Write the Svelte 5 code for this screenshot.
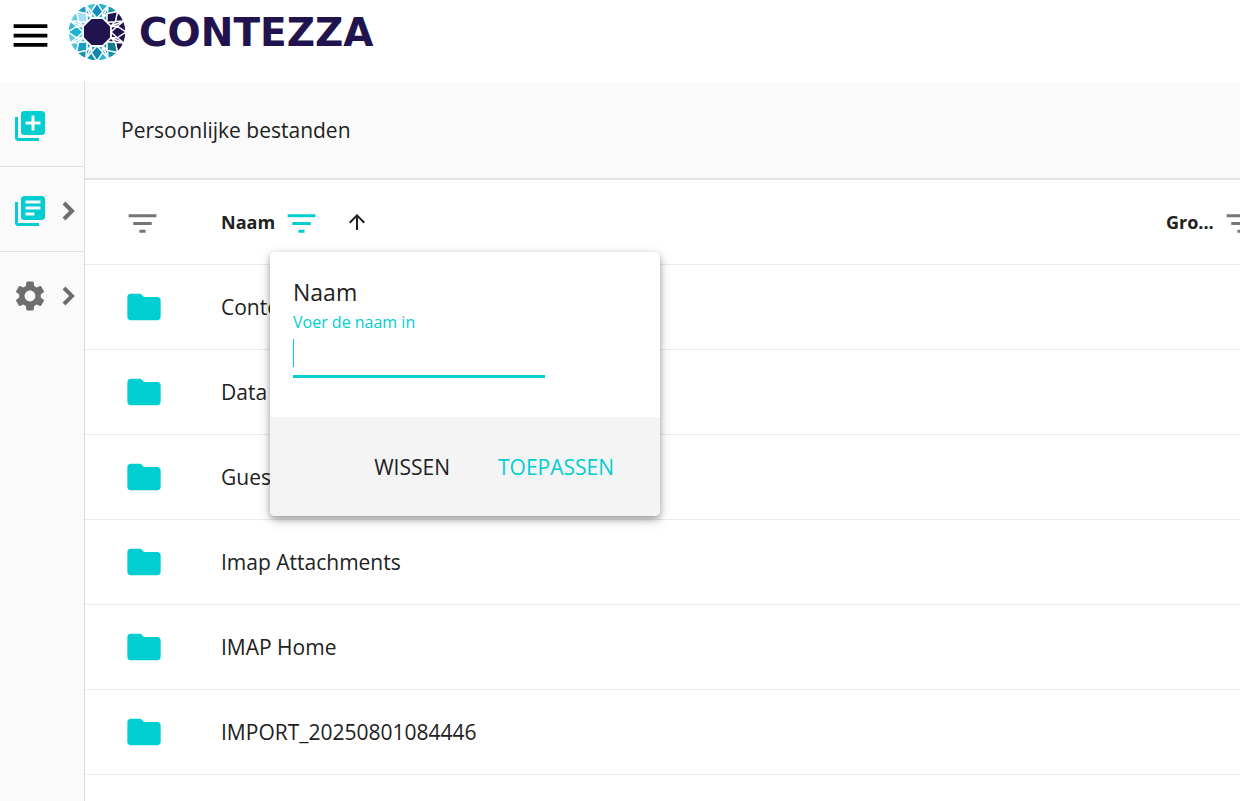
<script>
  import { onMount } from 'svelte';

  let nameFilter = $state('');
  let filterOpen = $state(true);
  let ascending = $state(true);
  let nameInput = $state(null);

  const folders = [
    'Contezza',
    'Data Dictionary',
    'Guest Home',
    'Imap Attachments',
    'IMAP Home',
    'IMPORT_20250801084446'
  ];

  let visibleFolders = $derived(ascending ? folders : [...folders].reverse());

  // Facets of the logo, clockwise from the right
  const facets = [
    { kite: '#21134d', left: '#21134d', right: '#21134d' },
    { kite: '#12808c', left: '#21134d', right: '#0f93b4' },
    { kite: '#0d86ab', left: '#35b9d5', right: '#0f93b4' },
    { kite: '#1a9fc0', left: '#1593b0', right: '#4cc5dc' },
    { kite: '#1bb5d3', left: '#62cde2', right: '#35b7d6' },
    { kite: '#a9dcf5', left: '#5fcfe4', right: '#1a9cc6' },
    { kite: '#128fc2', left: '#47c3da', right: '#27b0cb' },
    { kite: '#21134d', left: '#159aa9', right: '#21134d' }
  ];

  function point(radius, degrees) {
    const rad = (degrees * Math.PI) / 180;
    return `${(29 + radius * Math.cos(rad)).toFixed(2)},${(29 + radius * Math.sin(rad)).toFixed(2)}`;
  }

  function polygon(...points) {
    return points.map(([radius, degrees]) => point(radius, degrees)).join(' ');
  }

  function clearFilter() {
    nameFilter = '';
    nameInput?.focus();
  }

  onMount(() => {
    nameInput?.focus();
  });
</script>

{#snippet filterIcon()}
  <svg class="filter-icon" viewBox="0 0 24 24" aria-hidden="true">
    <path d="M10 18h4v-2h-4v2zM3 6v2h18V6H3zm3 7h12v-2H6v2z" />
  </svg>
{/snippet}

{#snippet chevron()}
  <svg class="chevron" viewBox="0 0 14 20" aria-hidden="true">
    <path d="M2 2l8 8-8 8" />
  </svg>
{/snippet}

<div class="app">
  <header>
    <button class="menu" aria-label="Menu">
      <svg viewBox="0 0 24 24" aria-hidden="true">
        <path d="M3 18h18v-2H3v2zm0-5h18v-2H3v2zm0-7v2h18V6H3z" />
      </svg>
    </button>
    <a class="logo" href="#home">
      <svg viewBox="0 0 58 58" aria-hidden="true">
        {#each facets as facet, i}
          {@const a = i * 45}
          <g stroke="#fff" stroke-width="1.4" stroke-linejoin="round">
            <polygon fill={facet.left} points={polygon([15, a - 22.5], [21, a - 15], [29, a], [29, a - 11], [29, a - 22.5])} />
            <polygon fill={facet.right} points={polygon([15, a + 22.5], [21, a + 15], [29, a], [29, a + 11], [29, a + 22.5])} />
            <polygon fill={facet.left} points={polygon([15, a - 22.5], [21, a - 15], [14, a])} />
            <polygon fill={facet.right} points={polygon([15, a + 22.5], [21, a + 15], [14, a])} />
            <polygon fill={facet.kite} points={polygon([14, a], [21, a - 16], [29, a], [21, a + 16])} />
            <path d="M{point(21, a - 15)}L{point(29, a - 22.5)}M{point(21, a + 15)}L{point(29, a + 22.5)}" />
          </g>
        {/each}
        <polygon
          fill="#21134d"
          stroke="#fff"
          stroke-width="1.6"
          points={polygon([15, 22.5], [15, 67.5], [15, 112.5], [15, 157.5], [15, 202.5], [15, 247.5], [15, 292.5], [15, 337.5])}
        />
      </svg>
      <span>CONTEZZA</span>
    </a>
  </header>

  <div class="body">
    <nav>
      <button class="nav-item" aria-label="Nieuw">
        <svg class="nav-icon" viewBox="0 0 24 24" aria-hidden="true">
          <path d="M4 6H2v14c0 1.1.9 2 2 2h14v-2H4V6zm16-4H8c-1.1 0-2 .9-2 2v12c0 1.1.9 2 2 2h12c1.1 0 2-.9 2-2V4c0-1.1-.9-2-2-2zm-1 9h-4v4h-2v-4H9V9h4V5h2v4h4v2z" />
        </svg>
      </button>
      <button class="nav-item" aria-label="Bestanden">
        <svg class="nav-icon" viewBox="0 0 24 24" aria-hidden="true">
          <path d="M4 6H2v14c0 1.1.9 2 2 2h14v-2H4V6zm16-4H8c-1.1 0-2 .9-2 2v12c0 1.1.9 2 2 2h12c1.1 0 2-.9 2-2V4c0-1.1-.9-2-2-2zm-1 9H9V9h10v2zm-4 4H9v-2h6v2zm4-8H9V5h10v2z" />
        </svg>
        {@render chevron()}
      </button>
      <button class="nav-item settings" aria-label="Instellingen">
        <svg class="nav-icon" viewBox="0 0 24 24" aria-hidden="true">
          <path d="M19.14 12.94c.04-.3.06-.61.06-.94 0-.32-.02-.64-.07-.94l2.03-1.58c.18-.14.23-.41.12-.61l-1.92-3.32c-.12-.22-.37-.29-.59-.22l-2.39.96c-.5-.38-1.03-.7-1.62-.94l-.36-2.54c-.04-.24-.24-.41-.48-.41h-3.84c-.24 0-.43.17-.47.41l-.36 2.54c-.59.24-1.13.57-1.62.94l-2.39-.96c-.22-.08-.47 0-.59.22L2.74 8.87c-.12.21-.08.47.12.61l2.03 1.58c-.05.3-.09.63-.09.94s.02.64.07.94l-2.03 1.58c-.18.14-.23.41-.12.61l1.92 3.32c.12.22.37.29.59.22l2.39-.96c.5.38 1.03.7 1.62.94l.36 2.54c.05.24.24.41.48.41h3.84c.24 0 .44-.17.47-.41l.36-2.54c.59-.24 1.13-.56 1.62-.94l2.39.96c.22.08.47 0 .59-.22l1.92-3.32c.12-.22.07-.47-.12-.61l-2.01-1.58zM12 15.6c-1.98 0-3.6-1.62-3.6-3.6s1.62-3.6 3.6-3.6 3.6 1.62 3.6 3.6-1.62 3.6-3.6 3.6z" />
        </svg>
        {@render chevron()}
      </button>
    </nav>

    <main>
      <h1>Persoonlijke bestanden</h1>

      <table>
        <thead>
          <tr>
            <th class="type">
              <button class="filter" aria-label="Filter op type">{@render filterIcon()}</button>
            </th>
            <th class="name">
              <div class="heading">
                <span>Naam</span>
                <button class="filter active" aria-label="Filter op naam" onclick={() => (filterOpen = !filterOpen)}>
                  {@render filterIcon()}
                </button>
                <button class="sort" class:descending={!ascending} aria-label="Sorteren" onclick={() => (ascending = !ascending)}>
                  <svg viewBox="0 0 24 24" aria-hidden="true">
                    <path d="M4 12l1.41 1.41L11 7.83V20h2V7.83l5.58 5.59L20 12l-8-8-8 8z" />
                  </svg>
                </button>
              </div>

              {#if filterOpen}
                <div class="popup">
                  <div class="popup-body">
                    <h2>Naam</h2>
                    <label for="name-filter">Voer de naam in</label>
                    <div class="field">
                      <input id="name-filter" type="text" autocomplete="off" bind:this={nameInput} bind:value={nameFilter} />
                      {#if !nameFilter}
                        <span class="caret"></span>
                      {/if}
                    </div>
                  </div>
                  <div class="popup-actions">
                    <button onclick={clearFilter}>WISSEN</button>
                    <button class="primary" onclick={() => (filterOpen = false)}>TOEPASSEN</button>
                  </div>
                </div>
              {/if}
            </th>
            <th class="size">
              <div class="heading">
                <span>Gro...</span>
                <button class="filter" aria-label="Filter op grootte">{@render filterIcon()}</button>
              </div>
            </th>
          </tr>
        </thead>
        <tbody>
          {#each visibleFolders as folder}
            <tr>
              <td class="type">
                <svg class="folder" viewBox="0 0 24 24" aria-hidden="true">
                  <path d="M10 4H4c-1.1 0-1.99.9-1.99 2L2 18c0 1.1.9 2 2 2h16c1.1 0 2-.9 2-2V8c0-1.1-.9-2-2-2h-8l-2-2z" />
                </svg>
              </td>
              <td>{folder}</td>
              <td></td>
            </tr>
          {/each}
        </tbody>
      </table>
    </main>
  </div>
</div>

<style>
  :global(body) {
    background: #fff;
    overflow: hidden;
  }

  .app {
    display: flex;
    flex-direction: column;
    min-height: 100vh;
    font-family: 'Open Sans', 'Noto Sans', sans-serif;
    font-size: 21px;
    color: #212121;
  }

  svg {
    display: block;
    fill: currentColor;
    flex: none;
  }

  button {
    padding: 0;
    border: none;
    background: none;
    font: inherit;
    color: inherit;
    cursor: pointer;
  }

  header {
    display: flex;
    align-items: flex-start;
    height: 82px;
  }

  .menu {
    padding: 13px 15px 0 8px;
    color: #000;
  }

  .menu svg {
    width: 45px;
    height: 45px;
  }

  .logo {
    display: flex;
    align-items: flex-start;
    gap: 13px;
    padding-top: 3px;
    color: #21134d;
    font-family: 'DejaVu Sans', 'Open Sans', sans-serif;
    font-size: 39px;
    font-weight: 700;
    line-height: 60px;
    text-decoration: none;
  }

  .logo svg {
    width: 58px;
    height: 58px;
  }

  .body {
    display: flex;
    flex: 1;
  }

  nav {
    flex: none;
    width: 84px;
    border-right: 1px solid #dcdcdc;
    background: #fafafa;
  }

  .nav-item {
    display: flex;
    align-items: center;
    justify-content: space-between;
    box-sizing: border-box;
    width: 100%;
    height: 85px;
    padding: 3px 8px 0 12px;
    border-bottom: 1px solid #e2e2e2;
    color: #00ced1;
  }

  .nav-item.settings {
    border-bottom-color: transparent;
    color: #6e6e6e;
  }

  .nav-icon {
    width: 36px;
    height: 36px;
  }

  .chevron {
    width: 14px;
    height: 20px;
    fill: none;
    stroke: #6e6e6e;
    stroke-width: 4;
  }

  main {
    flex: 1;
    min-width: 0;
    overflow: hidden;
  }

  h1 {
    margin: 0;
    padding: 0 36px;
    border-bottom: 2px solid #e4e4e4;
    background: #fafafa;
    font-size: 21px;
    font-weight: 400;
    line-height: 96px;
  }

  table {
    width: 100%;
    table-layout: fixed;
    border-collapse: separate;
    border-spacing: 0;
  }

  th,
  td {
    height: 84px;
    padding: 0;
    border-bottom: 1px solid #ebebeb;
    text-align: left;
  }

  th {
    position: relative;
    font-size: 18px;
    font-weight: 700;
  }

  th.type {
    width: 136px;
  }

  th.size {
    width: 74px;
  }

  .type {
    padding-left: 39px;
    box-sizing: border-box;
  }

  .heading {
    display: flex;
    align-items: center;
  }

  .filter {
    display: block;
    flex: none;
    padding: 2px 0 0 8px;
    color: #757575;
  }

  .type .filter {
    padding-left: 0;
  }

  .filter.active {
    color: #00ced1;
  }

  .filter-icon {
    width: 37px;
    height: 37px;
  }

  .sort {
    margin-left: 25px;
  }

  .sort svg {
    width: 24px;
    height: 24px;
  }

  .sort.descending {
    transform: rotate(180deg);
  }

  .folder {
    width: 40px;
    height: 40px;
    color: #00ced1;
  }

  .popup {
    position: absolute;
    top: 72px;
    left: 49px;
    z-index: 1;
    width: 390px;
    border-radius: 5px;
    background: #fff;
    box-shadow: 0 3px 6px rgba(0, 0, 0, 0.3), 0 4px 14px rgba(0, 0, 0, 0.16);
    font-size: 21px;
    font-weight: 400;
    overflow: hidden;
  }

  .popup-body {
    padding: 24px 23px 39px;
  }

  h2 {
    margin: 0;
    font-size: 23px;
    font-weight: 400;
    line-height: 32px;
  }

  label {
    display: block;
    font-size: 16px;
    line-height: 28px;
    color: #00ced1;
  }

  .field {
    position: relative;
    width: 252px;
  }

  input {
    display: block;
    box-sizing: border-box;
    width: 100%;
    height: 42px;
    padding: 0 0 6px;
    border: none;
    border-bottom: 3px solid #00ced1;
    outline: none;
    background: none;
    font: inherit;
    color: inherit;
    caret-color: #00ced1;
  }

  .caret {
    position: absolute;
    top: 3px;
    left: 0;
    width: 1px;
    height: 28px;
    background: #00ced1;
    pointer-events: none;
  }

  .popup-actions {
    display: flex;
    justify-content: flex-end;
    padding: 25px 22px 24px;
    background: #f4f4f4;
  }

  .popup-actions button {
    padding: 0 24px;
    font-size: 21px;
    line-height: 50px;
  }

  .popup-actions .primary {
    color: #00ced1;
  }
</style>
